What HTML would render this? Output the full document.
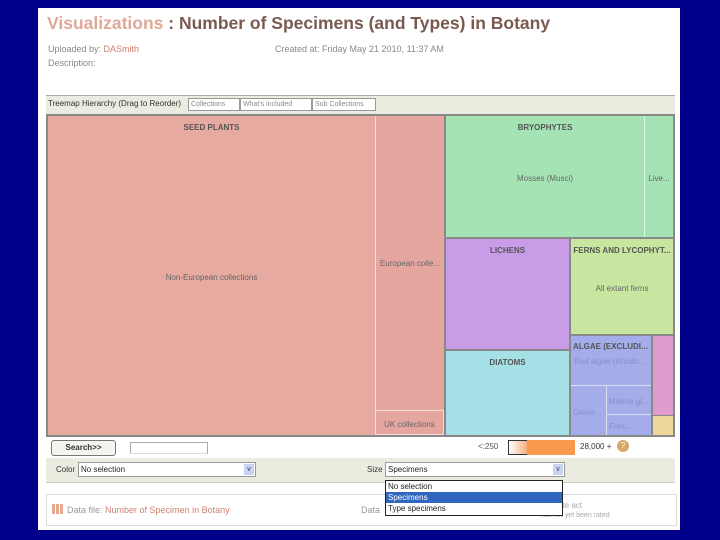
<!DOCTYPE html>
<html><head><style>
body{margin:0;width:720px;height:540px;background:#00008a;position:relative;overflow:hidden;font-family:"Liberation Sans",sans-serif}
.a{position:absolute}
.page{left:38px;top:8px;width:642px;height:522px;background:#fff}
.r{position:absolute;box-sizing:border-box}
.t{position:absolute;font-size:8px;color:#666;text-align:center;width:100%}
.b{font-weight:bold;color:#555}
.s{font-size:9px;color:#888}
</style></head><body>
<div class="a page"></div>
<div class="a" style="left:47px;top:13px;font-size:17.5px;font-weight:bold;color:#7a5a50;white-space:nowrap"><span style="color:#e0a898">Visualizations</span> : Number of Specimens (and Types) in Botany</div>
<div class="a s" style="left:48px;top:44px">Uploaded by: <span style="color:#d08070">DASmith</span></div>
<div class="a s" style="left:275px;top:44px">Created at: Friday May 21 2010, 11:37 AM</div>
<div class="a s" style="left:48px;top:58px">Description:</div>
<div class="a" style="left:46px;top:95px;width:629px;height:19px;background:#ecebe0;border-top:1px solid #aaa"></div>
<div class="a" style="left:48px;top:99px;font-size:8px;color:#333">Treemap Hierarchy (Drag to Reorder)</div>
<div class="a" style="left:188px;top:98px;width:48px;height:11px;border:1px solid #999;background:#fff;font-size:7px;color:#888;padding-left:2px;line-height:11px">Collections</div>
<div class="a" style="left:240px;top:98px;width:68px;height:11px;border:1px solid #999;background:#fff;font-size:7px;color:#888;padding-left:2px;line-height:11px">What's included</div>
<div class="a" style="left:312px;top:98px;width:60px;height:11px;border:1px solid #999;background:#fff;font-size:7px;color:#888;padding-left:2px;line-height:11px">Sub Collections</div>
<div class="a" style="left:46px;top:114px;width:629px;height:323px;background:#888"></div>
<div class="r" style="left:48px;top:116px;width:327px;height:319px;background:#e6aaa0"><div class="t b" style="top:7px">SEED PLANTS</div><div class="t" style="top:157px">Non-European collections</div></div>
<div class="r" style="left:375px;top:116px;width:69px;height:294px;background:#e6a6a0;border-left:1px solid #f4dcd8"><div class="t" style="top:143px">European colle...</div></div>
<div class="r" style="left:375px;top:410px;width:69px;height:25px;background:#e6a6a0;border:1px solid #f4dcd8"><div class="t" style="top:9px">UK collections</div></div>
<div class="r" style="left:446px;top:116px;width:198px;height:121px;background:#a4e4b4"><div class="t b" style="top:7px">BRYOPHYTES</div><div class="t" style="top:58px">Mosses (Musci)</div></div>
<div class="r" style="left:644px;top:116px;width:29px;height:121px;background:#a4e4b4;border-left:1px solid #e0f6e6"><div class="t" style="top:58px">Live...</div></div>
<div class="r" style="left:446px;top:239px;width:123px;height:110px;background:#c89ce6"><div class="t b" style="top:7px">LICHENS</div></div>
<div class="r" style="left:571px;top:239px;width:102px;height:95px;background:#c8e6a0"><div class="t b" style="top:7px;white-space:nowrap">FERNS AND LYCOPHYT...</div><div class="t" style="top:45px">All extant ferns</div></div>
<div class="r" style="left:446px;top:351px;width:123px;height:84px;background:#a4e0e6"><div class="t b" style="top:7px">DIATOMS</div></div>
<div class="r" style="left:571px;top:336px;width:80px;height:99px;background:#a4acea"><div class="t b" style="top:6px;text-align:left;left:2px;white-space:nowrap">ALGAE (EXCLUDI...</div><div class="t" style="top:21px;text-align:left;left:3px;color:#8890c8;white-space:nowrap">Red algae (Rhodo...</div></div>
<div class="r" style="left:571px;top:385px;width:80px;height:1px;background:#dde"></div>
<div class="r" style="left:606px;top:386px;width:1px;height:49px;background:#dde"></div>
<div class="r" style="left:607px;top:414px;width:44px;height:1px;background:#dde"></div>
<div class="a" style="left:573px;top:408px;font-size:8px;color:#8890c8">Grove...</div>
<div class="a" style="left:609px;top:397px;font-size:8px;color:#8890c8">Marine gl...</div>
<div class="a" style="left:609px;top:422px;font-size:8px;color:#8890c8">Fres...</div>
<div class="r" style="left:653px;top:336px;width:20px;height:79px;background:#e09ccc"></div>
<div class="r" style="left:653px;top:416px;width:20px;height:19px;background:#ecd89c"></div>
<div class="a" style="left:51px;top:440px;width:63px;height:14px;border:1px solid #777;border-radius:3px;background:#f4f4f0;font-size:8px;font-weight:bold;color:#333;text-align:center;line-height:14px">Search&gt;&gt;</div>
<div class="a" style="left:130px;top:442px;width:76px;height:10px;border:1px solid #aaa;border-bottom-color:#ddd"></div>
<div class="a" style="left:478px;top:442px;font-size:8px;color:#555">&lt;:250</div>
<div class="a" style="left:508px;top:440px;width:18px;height:13px;border:1px solid #333;background:linear-gradient(90deg,#fff,#f4b080)"></div>
<div class="a" style="left:527px;top:440px;width:48px;height:15px;background:#f79a50"></div>
<div class="a" style="left:580px;top:442px;font-size:8px;color:#333">28,000 +</div>
<div class="a" style="left:617px;top:440px;width:12px;height:12px;border-radius:50%;background:#d8a868;color:#fff;font-size:8px;text-align:center;line-height:12px">?</div>
<div class="a" style="left:46px;top:458px;width:629px;height:24px;background:#ecebe0;border-bottom:1px solid #ccc"></div>
<div class="a" style="left:56px;top:465px;font-size:8px;color:#333">Color</div>
<div class="a" style="left:78px;top:462px;width:174px;height:13px;border:1px solid #999;background:#fff;font-size:8px;color:#222;line-height:13px;padding-left:2px">No selection<div class="a" style="right:1px;top:1px;width:10px;height:11px;background:#c8d4f0;font-size:7px;text-align:center;line-height:11px;color:#336">v</div></div>
<div class="a" style="left:367px;top:465px;font-size:8px;color:#333">Size</div>
<div class="a" style="left:385px;top:462px;width:176px;height:13px;border:1px solid #999;background:#fff;font-size:8px;color:#222;line-height:13px;padding-left:2px">Specimens<div class="a" style="right:1px;top:1px;width:10px;height:11px;background:#c8d4f0;font-size:7px;text-align:center;line-height:11px;color:#336">v</div></div>
<div class="a" style="left:46px;top:494px;width:629px;height:30px;border:1px solid #ddd"></div>
<div class="a" style="left:52px;top:504px;width:12px;height:10px;background:repeating-linear-gradient(90deg,#e8a890 0 3px,#fff 3px 4px)"></div>
<div class="a" style="left:67px;top:505px;font-size:9px;color:#999">Data file: <span style="color:#d08070">Number of Specimen in Botany</span></div>
<div class="a" style="left:361px;top:505px;font-size:9px;color:#999">Data</div>
<div class="a" style="left:558px;top:501px;font-size:8px;color:#aaa">ote act</div>
<div class="a" style="left:540px;top:512px;font-size:7px;color:#aaa">has not yet been rated</div>
<div class="a" style="left:385px;top:480px;width:176px;height:34px;border:1px solid #222;background:#fff;font-size:8px;color:#222">
<div style="height:11px;line-height:11px;padding-left:2px">No selection</div>
<div style="height:11px;line-height:11px;padding-left:2px;background:#3166c0;color:#fff">Specimens</div>
<div style="height:11px;line-height:11px;padding-left:2px">Type specimens</div></div>
</body></html>
